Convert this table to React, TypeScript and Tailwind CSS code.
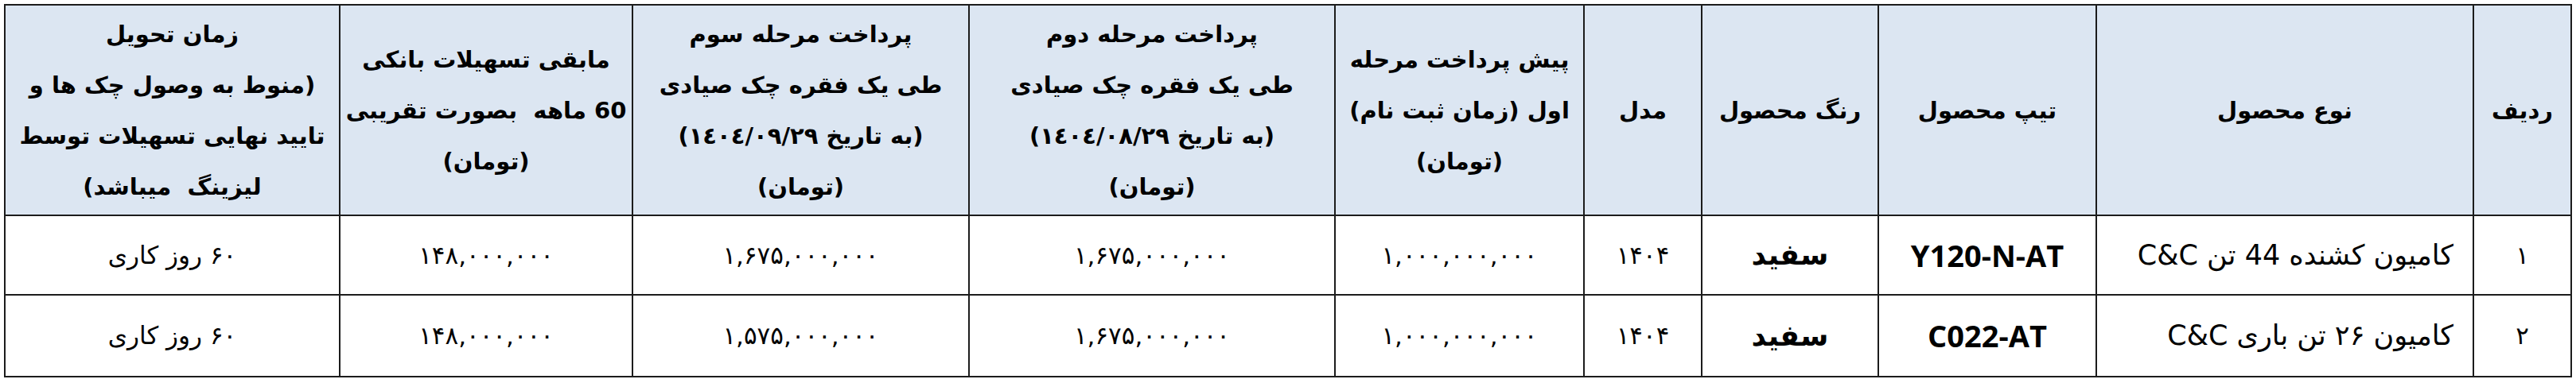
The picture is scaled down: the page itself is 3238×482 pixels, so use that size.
const persianFont = "font-['DejaVu_Sans',sans-serif]";

interface PriceRow {
  index: string;
  productType: string;
  productCode: string;
  color: string;
  model: string;
  prePayment: string;
  secondPayment: string;
  thirdPayment: string;
  bankLoan: string;
  delivery: string;
}

const priceRows: PriceRow[] = [
  {
    index: "۱",
    productType: "کامیون کشنده 44 تن C&C",
    productCode: "Y120-N-AT",
    color: "سفید",
    model: "۱۴۰۴",
    prePayment: "۱,۰۰۰,۰۰۰,۰۰۰",
    secondPayment: "۱,۶۷۵,۰۰۰,۰۰۰",
    thirdPayment: "۱,۶۷۵,۰۰۰,۰۰۰",
    bankLoan: "۱۴۸,۰۰۰,۰۰۰",
    delivery: "۶۰ روز کاری",
  },
  {
    index: "۲",
    productType: "کامیون ۲۶ تن باری C&C",
    productCode: "C022-AT",
    color: "سفید",
    model: "۱۴۰۴",
    prePayment: "۱,۰۰۰,۰۰۰,۰۰۰",
    secondPayment: "۱,۶۷۵,۰۰۰,۰۰۰",
    thirdPayment: "۱,۵۷۵,۰۰۰,۰۰۰",
    bankLoan: "۱۴۸,۰۰۰,۰۰۰",
    delivery: "۶۰ روز کاری",
  },
];

const headerColumns: { width: string; lines: string[] }[] = [
  { width: "w-[123px]", lines: ["ردیف"] },
  { width: "w-[474px]", lines: ["نوع محصول"] },
  { width: "w-[274px]", lines: ["تیپ محصول"] },
  { width: "w-[222px]", lines: ["رنگ محصول"] },
  { width: "w-[148px]", lines: ["مدل"] },
  { width: "w-[313px]", lines: ["پیش پرداخت مرحله", "اول (زمان ثبت نام)", "(تومان)"] },
  {
    width: "w-[460px]",
    lines: ["پرداخت مرحله دوم", "طی یک فقره چک صیادی", "(به تاریخ ١٤٠٤/٠٨/٢٩)", "(تومان)"],
  },
  {
    width: "w-[423px]",
    lines: ["پرداخت مرحله سوم", "طی یک فقره چک صیادی", "(به تاریخ ١٤٠٤/٠٩/٢٩)", "(تومان)"],
  },
  { width: "w-[368px]", lines: ["مابقی تسهیلات بانکی", "60 ماهه  بصورت تقریبی", "(تومان)"] },
  {
    width: "w-[421px]",
    lines: ["زمان تحویل", "(منوط به وصول چک ها و", "تایید نهایی تسهیلات توسط", "لیزینگ  میباشد)"],
  },
];

const cellBorder = "border-2 border-[#1c1c1c]";
const bodyCell = `${cellBorder} text-center align-middle text-[31px] text-black`;

export default function App() {
  return (
    <div className="bg-white pl-[5px] pt-[5px] w-[3238px] h-[482px]">
      <table dir="rtl" className={`table-fixed border-collapse w-[3228px] ${persianFont}`}>
        <colgroup>
          {headerColumns.map((column, index) => (
            <col key={index} className={column.width} />
          ))}
        </colgroup>
        <thead>
          <tr className="h-[265px] bg-[#dce6f2]">
            {headerColumns.map((column, index) => (
              <th
                key={index}
                className={`${cellBorder} text-center align-middle font-bold text-[29px] leading-[64px] text-black`}
              >
                {column.lines.map((line, lineIndex) => (
                  <div key={lineIndex} className="whitespace-pre">
                    {line}
                  </div>
                ))}
              </th>
            ))}
          </tr>
        </thead>
        <tbody>
          {priceRows.map((row, rowIndex) => (
            <tr key={row.productCode} className={rowIndex === 0 ? "h-[100px]" : "h-[103px]"}>
              <td className={bodyCell}>{row.index}</td>
              <td className={`${cellBorder} align-middle text-right pr-[24px] text-[35px] text-black whitespace-nowrap`}>
                {row.productType}
              </td>
              <td className={`${cellBorder} text-center align-middle text-[38px] font-bold text-black font-['Open_Sans',sans-serif]`}>
                {row.productCode}
              </td>
              <td className={`${bodyCell} font-bold text-[36px]`}>{row.color}</td>
              <td className={bodyCell}>{row.model}</td>
              <td className={bodyCell}>{row.prePayment}</td>
              <td className={bodyCell}>{row.secondPayment}</td>
              <td className={bodyCell}>{row.thirdPayment}</td>
              <td className={bodyCell}>{row.bankLoan}</td>
              <td className={bodyCell}>{row.delivery}</td>
            </tr>
          ))}
        </tbody>
      </table>
    </div>
  );
}
